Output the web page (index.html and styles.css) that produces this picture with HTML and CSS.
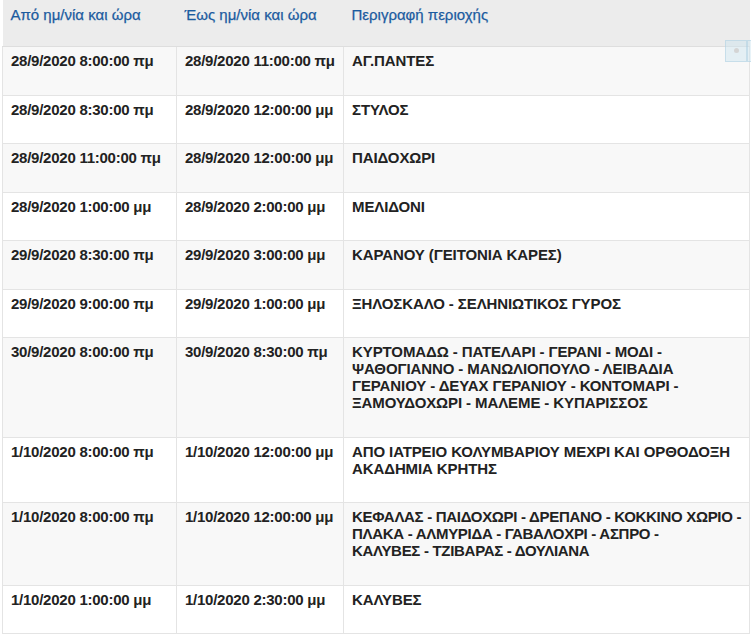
FILE: index.html
```html
<!DOCTYPE html>
<html lang="el">
<head>
<meta charset="utf-8">
<title>Διακοπές ρεύματος</title>
<link rel="stylesheet" href="styles.css">
</head>
<body>
<div class="wrap">
<table class="outages">
  <colgroup>
    <col class="c-from">
    <col class="c-to">
    <col class="c-area">
  </colgroup>
  <thead>
    <tr>
      <th>Από ημ/νία και ώρα</th>
      <th>Έως ημ/νία και ώρα</th>
      <th>Περιγραφή περιοχής</th>
    </tr>
  </thead>
  <tbody>
    <tr class="odd"><td class="dt">28/9/2020 8:00:00 πμ</td><td class="dt">28/9/2020 11:00:00 πμ</td><td class="area">ΑΓ.ΠΑΝΤΕΣ</td></tr>
    <tr><td class="dt">28/9/2020 8:30:00 πμ</td><td class="dt">28/9/2020 12:00:00 μμ</td><td class="area">ΣΤΥΛΟΣ</td></tr>
    <tr class="odd"><td class="dt">28/9/2020 11:00:00 πμ</td><td class="dt">28/9/2020 12:00:00 μμ</td><td class="area">ΠΑΙΔΟΧΩΡΙ</td></tr>
    <tr><td class="dt">28/9/2020 1:00:00 μμ</td><td class="dt">28/9/2020 2:00:00 μμ</td><td class="area">ΜΕΛΙΔΟΝΙ</td></tr>
    <tr class="odd"><td class="dt">29/9/2020 8:30:00 πμ</td><td class="dt">29/9/2020 3:00:00 μμ</td><td class="area">ΚΑΡΑΝΟΥ (ΓΕΙΤΟΝΙΑ ΚΑΡΕΣ)</td></tr>
    <tr><td class="dt">29/9/2020 9:00:00 πμ</td><td class="dt">29/9/2020 1:00:00 μμ</td><td class="area">ΞΗΛΟΣΚΑΛΟ - ΣΕΛΗΝΙΩΤΙΚΟΣ ΓΥΡΟΣ</td></tr>
    <tr class="odd"><td class="dt">30/9/2020 8:00:00 πμ</td><td class="dt">30/9/2020 8:30:00 πμ</td><td class="area">ΚΥΡΤΟΜΑΔΩ - ΠΑΤΕΛΑΡΙ - ΓΕΡΑΝΙ - ΜΟΔΙ - ΨΑΘΟΓΙΑΝΝΟ - ΜΑΝΩΛΙΟΠΟΥΛΟ - ΛΕΙΒΑΔΙΑ ΓΕΡΑΝΙΟΥ - ΔΕΥΑΧ ΓΕΡΑΝΙΟΥ - ΚΟΝΤΟΜΑΡΙ - ΞΑΜΟΥΔΟΧΩΡΙ - ΜΑΛΕΜΕ - ΚΥΠΑΡΙΣΣΟΣ</td></tr>
    <tr><td class="dt">1/10/2020 8:00:00 πμ</td><td class="dt">1/10/2020 12:00:00 μμ</td><td class="area">ΑΠΟ ΙΑΤΡΕΙΟ ΚΟΛΥΜΒΑΡΙΟΥ ΜΕΧΡΙ ΚΑΙ ΟΡΘΟΔΟΞΗ ΑΚΑΔΗΜΙΑ ΚΡΗΤΗΣ</td></tr>
    <tr class="odd"><td class="dt">1/10/2020 8:00:00 πμ</td><td class="dt">1/10/2020 12:00:00 μμ</td><td class="area tight"><span class="ln">ΚΕΦΑΛΑΣ - ΠΑΙΔΟΧΩΡΙ - ΔΡΕΠΑΝΟ - ΚΟΚΚΙΝΟ ΧΩΡΙΟ -</span><br><span class="ln">ΠΛΑΚΑ - ΑΛΜΥΡΙΔΑ - ΓΑΒΑΛΟΧΡΙ - ΑΣΠΡΟ -</span><br><span class="ln">ΚΑΛΥΒΕΣ - ΤΖΙΒΑΡΑΣ - ΔΟΥΛΙΑΝΑ</span></td></tr>
    <tr><td class="dt">1/10/2020 1:00:00 μμ</td><td class="dt">1/10/2020 2:30:00 μμ</td><td class="area">ΚΑΛΥΒΕΣ</td></tr>
  </tbody>
</table>
<div class="widget"><span class="dot"></span></div>
<div class="widget widget-2"></div>
</div>
</body>
</html>
```

FILE: styles.css
```css
html, body {
  margin: 0;
  padding: 0;
  background: #ffffff;
}

body {
  font-family: "Liberation Sans", Arial, sans-serif;
  font-size: 15px;
  color: #222222;
}

.wrap {
  position: relative;
  width: 751px;
}

.outages {
  border-collapse: collapse;
  margin-left: 2px;
  width: 748px;
  table-layout: fixed;
}

.c-from { width: 174px; }
.c-to { width: 167px; }
.c-area { width: auto; }

.outages thead tr {
  background: #ececec;
}

.outages th {
  text-align: left;
  font-weight: normal;
  color: #1b5b9f;
  vertical-align: top;
  padding: 6px 8px 0 8px;
  height: 40px;
  border: none;
  border-bottom: 1px solid #dedede;
  -webkit-text-stroke: 0.25px #1b5b9f;
}

.outages td {
  font-weight: bold;
  line-height: 17px;
  vertical-align: top;
  padding: 5px 8px 25.5px 8px;
  border: 1px solid #e4e4e4;
}

.outages td.dt {
  white-space: nowrap;
  letter-spacing: -0.25px;
}

.outages td.area {
  padding-right: 0;
  letter-spacing: -0.1px;
}

.outages td.tight {
  letter-spacing: -0.3px;
}

.ln {
  white-space: nowrap;
}

.outages tbody tr {
  background: #ffffff;
}

.outages tbody tr.odd {
  background: #f8f8f8;
}

.widget {
  position: absolute;
  top: 40px;
  left: 725px;
  width: 20px;
  height: 20px;
  background: rgba(205, 228, 240, 0.45);
  border: 1px solid rgba(175, 208, 226, 0.55);
}

.widget-2 {
  left: 747px;
  width: 6px;
}

.dot {
  position: absolute;
  left: 8px;
  top: 7px;
  width: 5px;
  height: 5px;
  border-radius: 50%;
  background: #d4d4d4;
}
```
